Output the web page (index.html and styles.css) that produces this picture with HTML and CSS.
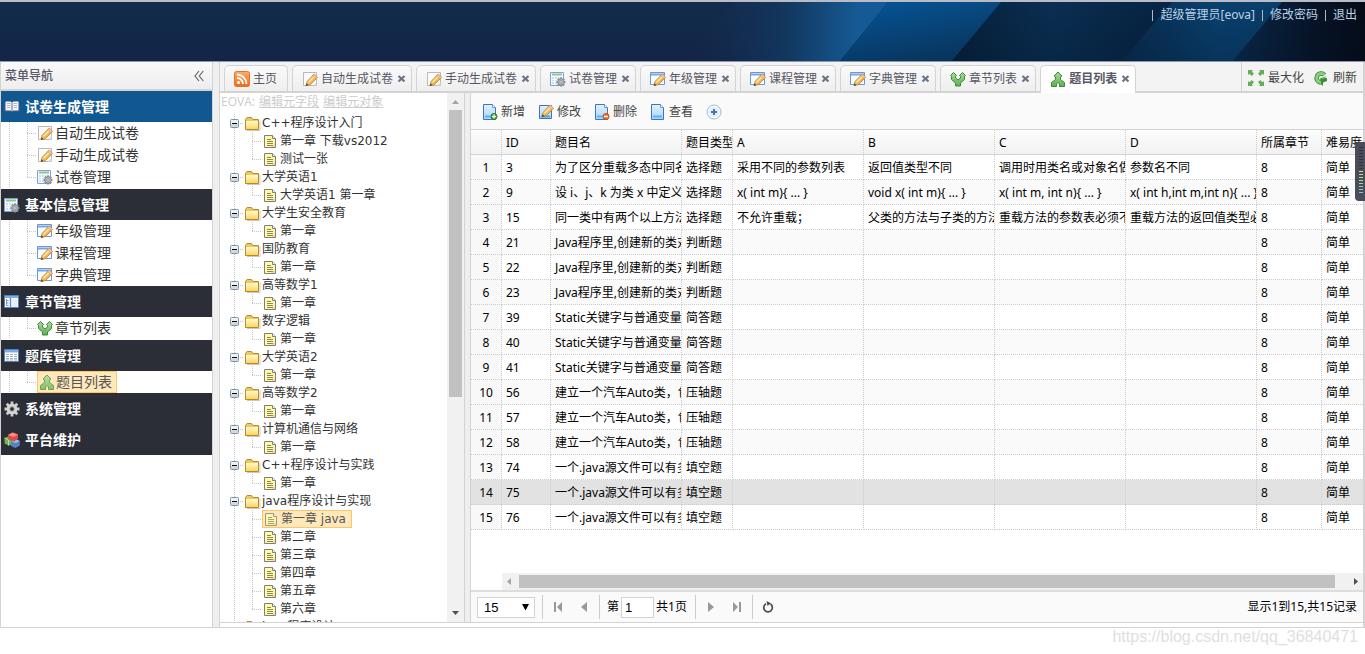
FILE: index.html
```html
<!DOCTYPE html>
<html lang="zh-CN">
<head>
<meta charset="utf-8">
<title>题目列表</title>
<link rel="stylesheet" href="styles.css">
</head>
<body>
<svg class="sprite" aria-hidden="true">
  <defs>
    <linearGradient id="gGreen" x1="0" y1="0" x2="0" y2="1"><stop offset="0" stop-color="#a5dc98"/><stop offset="1" stop-color="#5fb055"/></linearGradient>
    <linearGradient id="gRss" x1="0" y1="0" x2="0" y2="1"><stop offset="0" stop-color="#ffac62"/><stop offset="1" stop-color="#ee6a1c"/></linearGradient>
    <linearGradient id="gPen" x1="0" y1="0" x2="1" y2="1"><stop offset="0" stop-color="#ffe08a"/><stop offset="1" stop-color="#e8992c"/></linearGradient>
    <linearGradient id="gFold" x1="0" y1="0" x2="0" y2="1"><stop offset="0" stop-color="#fffbd0"/><stop offset="1" stop-color="#fbd560"/></linearGradient>
    <linearGradient id="gBlue" x1="0" y1="0" x2="0" y2="1"><stop offset="0" stop-color="#e2f1ff"/><stop offset="1" stop-color="#a9d4fb"/></linearGradient>
    <g id="pen"><path d="M4 14.500 5.200 10.300 12 3.200 15.500 6.500 8.400 13.600z" fill="url(#gPen)" stroke="#bb8030" stroke-width=".8"/><path d="M10.800 4.600 12.400 3 15.600 6.200 14 7.800z" fill="#f6c9a4" stroke="#c08850" stroke-width=".6"/><path d="M6.500 11.400 12 5.800" stroke="#fff1b8" stroke-width="1.200"/><path d="M3.800 15 4.600 12.300 6.500 14.200z" fill="#5c4630"/></g>
    <g id="cog"><path d="M11 6.500v9M6.500 11h9M7.800 7.800l6.400 6.400M14.200 7.800l-6.400 6.400" stroke="#858b92" stroke-width="2"/><circle cx="11" cy="11" r="3.300" fill="#b4b9be" stroke="#858b92"/><circle cx="11" cy="11" r="1.300" fill="#f4f6f8" stroke="#777d84" stroke-width=".7"/></g>
  </defs>
  <symbol id="i-rss" viewBox="0 0 16 16"><rect x=".5" y=".5" width="15" height="15" rx="2" fill="url(#gRss)" stroke="#e8702a"/><circle cx="4.500" cy="11.500" r="1.600" fill="#fff"/><path d="M3 7a6 6 0 0 1 6 6M3 3.500A9.500 9.500 0 0 1 12.500 13" fill="none" stroke="#fff" stroke-width="1.800"/></symbol>
  <symbol id="i-note" viewBox="0 0 16 16"><path d="M1.500 1.500h13v13h-13z" fill="#fbfbfb" stroke="#b9b9b9"/><path d="M11 14.500l3.500-3.500v3.500z" fill="#dcdcdc"/><use href="#pen"/></symbol>
  <symbol id="i-tablegear" viewBox="0 0 16 16"><path d="M.5 1.500h13v13H.5z" fill="#f3f8fe" stroke="#7fa3d3"/><path d="M2 3.500h10" stroke="#94c58b" stroke-width="2"/><path d="M2 6h10v7H2z" fill="#c9dcf2"/><path d="M2 8.500h10M2 10.500h10M4.500 6v7M7.500 6v7M10 6v7" stroke="#fff" stroke-width=".9"/><use href="#cog"/></symbol>
  <symbol id="i-winpen" viewBox="0 0 16 16"><path d="M.5 1.500h14v12H.5z" fill="#f7faff" stroke="#6f97cf"/><path d="M1 2h13v2.500H1z" fill="#79a6e2"/><path d="M1 2.500h13" stroke="#b5d0f4"/><use href="#pen"/></symbol>
  <symbol id="i-book" viewBox="0 0 16 16"><path d="M0 3.500h16v9.500H9.500L8 14l-1.500-1H0z" fill="#35548a"/><path d="M1.500 2.500h5L8 3.500l1.500-1h5V11.500h-5L8 12.300l-1.500-.8h-5z" fill="#f5f7fa"/><path d="M3 4.500h3.500M3 6.500h3.500M3 8.500h3.500M9.500 4.500H13M9.500 6.500H13M9.500 8.500H13" stroke="#aeb6c2"/><path d="M8 3.500v9" stroke="#5c6f90"/></symbol>
  <symbol id="i-columns" viewBox="0 0 16 16"><path d="M.5 1.500h14v12H.5z" fill="#fff" stroke="#4f82c7"/><path d="M1 2h13v2H1z" fill="#7fabe6"/><path d="M6.500 4v9.500" stroke="#5d8fd2" stroke-width="1.500"/><path d="M2.500 5v6.500h2M2.500 6.500h2M2.500 9h2" fill="none" stroke="#8892a0"/><path d="M8.500 5h5v8h-5z" fill="#e6f0fc"/></symbol>
  <symbol id="i-list" viewBox="0 0 16 16"><path d="M.5 1.500h14v12H.5z" fill="#fff" stroke="#4f82c7"/><path d="M1 2h13v2.500H1z" fill="#7fabe6"/><path d="M2 6.500h11M2 8.500h11M2 10.500h11M2 12h11" stroke="#a6acb5" stroke-dasharray="3 1"/></symbol>
  <symbol id="i-gear" viewBox="0 0 16 16"><path d="M8 .5v15M.5 8h15M2.700 2.700l10.600 10.600M13.300 2.700 2.700 13.300" stroke="#cfcfcf" stroke-width="2.800"/><circle cx="8" cy="8" r="5.300" fill="#d6d6d6"/><circle cx="8" cy="8" r="2.300" fill="#2b2d37" stroke="#a8a8a8"/></symbol>
  <symbol id="i-cubes" viewBox="0 0 16 16"><path d="M.5 6 4 4.500 8 6.500v6L4.500 13.500.5 11.500z" fill="#6cb35c"/><path d="M.5 6 4.500 8v5.500" fill="none" stroke="#b3e09f"/><path d="M7 9l4-2 4.800 2v4.500L11.500 16 7 14z" fill="#5681c3"/><path d="M7 9l4.500 2 4.300-2-4.300-2z" fill="#9fbfe8"/><path d="M4 3 8.500.5 14 2.500V7L10 9.500 4.500 7.500z" fill="#dc4b48"/><path d="M4 3l5.500 2L14 2.500 8.500.5z" fill="#f58d84"/></symbol>
  <symbol id="i-split" viewBox="0 0 16 16"><path d="M.5 4.500 3.500 1.500l3 3-1 .8V7L8 9l2.500-2V5.300l-1-.8 3-3 3 3-1 .8V8.500L10.500 12v3h-5v-3L1.500 8.500V5.300z" fill="url(#gGreen)" stroke="#3c8b3a" stroke-linejoin="round"/></symbol>
  <symbol id="i-merge" viewBox="0 0 16 16"><path d="M8 1l4 4-1.500 1v2.500l4 3v4h-5v-2.500L8 11.500 6.500 13v2.500h-5v-4l4-3V6L4 5z" fill="url(#gGreen)" stroke="#3c8b3a" stroke-linejoin="round"/></symbol>
  <symbol id="i-folder" viewBox="0 0 16 16"><path d="M2 15.500h13V5.500" fill="none" stroke="#c9c9c9"/><path d="M.5 4.500 2 2.500h4.500l1.500 2h5.500v10H.5z" fill="#f0c860" stroke="#b98a28"/><path d="M1 6h12v8H1z" fill="url(#gFold)"/></symbol>
  <symbol id="i-file" viewBox="0 0 16 16"><path d="M2.500 2.500h8l3 3v9h-11z" fill="#fffda4" stroke="#7f7f7f"/><path d="M13 10v4H9z" fill="#fbd9a0"/><path d="M10.500 2.500v3h3" fill="#fff" stroke="#7f7f7f"/><path d="M5 6.500h4M5 8.500h6M5 10.500h6M5 12.500h6" stroke="#8a8560"/></symbol>
  <symbol id="i-minus" viewBox="0 0 9 9"><rect x=".5" y=".5" width="8" height="8" rx="1" fill="#eef1f4" stroke="#7d93ab"/><path d="M1 5h7v3H1z" fill="#d5d9dd"/><path d="M2 4.500h5" stroke="#000"/></symbol>
  <symbol id="i-page" viewBox="0 0 16 16"><path d="M1.500.5h9l3 3v12h-12z" fill="url(#gBlue)" stroke="#3c74bd"/><path d="M10.500.5v3h3" fill="#fff" stroke="#6d9bd4"/><path d="M3 12.500h9" stroke="#5ab4f0" stroke-width="2"/></symbol>
  <symbol id="i-add" viewBox="0 0 16 16"><use href="#i-page"/><circle cx="12" cy="12.500" r="3" fill="#55a63a" stroke="#2f7d1c"/><path d="M12 10.500v4M10 12.500h4" stroke="#fff" stroke-width="1.200"/></symbol>
  <symbol id="i-edit" viewBox="0 0 16 16"><path d="M1.500 1.500h12v13h-12z" fill="url(#gBlue)" stroke="#3c74bd"/><path d="M3 12.500h9" stroke="#4ba6ea" stroke-width="2"/><use href="#pen" y="-2"/></symbol>
  <symbol id="i-del" viewBox="0 0 16 16"><use href="#i-page"/><circle cx="12" cy="12.500" r="3" fill="#f0702a" stroke="#cf4a0c"/><path d="M10 12.500h4" stroke="#fff" stroke-width="1.400"/></symbol>
  <symbol id="i-plus" viewBox="0 0 16 16"><circle cx="8" cy="8" r="7" fill="#fff" stroke="#a9b5c6"/><circle cx="8" cy="8" r="5.500" fill="#e3effb"/><path d="M8 5v6M5 8h6" stroke="#3e79bf" stroke-width="2"/></symbol>
  <symbol id="i-max" viewBox="0 0 16 16"><path d="M0 0h5L3.800 1.500 6 3.700 3.700 6 1.500 3.800 0 5zM16 0v5l-1.500-1.200L12.300 6 10 3.700l2.200-2.200L11 0zM0 16v-5l1.500 1.200L3.700 10 6 12.300l-2.200 2.200L5 16zM16 16h-5l1.200-1.500L10 12.300l2.300-2.300 2.200 2.200L16 11z" fill="#62ad59"/></symbol>
  <symbol id="i-refresh" viewBox="0 0 16 16"><path d="M11.500 5A4.500 4.500 0 1 0 8 12.500" fill="none" stroke="#3b8b3b" stroke-width="4.600"/><path d="M7.500 8h6.500v3l-4 1.500V16L6.500 12.500z" fill="#3c8b3a"/><path d="M11.500 5A4.500 4.500 0 1 0 8 12.500" fill="none" stroke="#8ecb83" stroke-width="3"/><path d="M6.500 8.500h5L13.500 6z" fill="#7dbd73"/></symbol>
  <symbol id="i-x" viewBox="0 0 9 9"><path d="M1.500 2l6 5.500M7.500 2l-6 5.500" stroke="#6a7385" stroke-width="2.200"/></symbol>
</svg>

<header class="banner">
  <svg class="banner-art" viewBox="0 0 705 59" preserveAspectRatio="none" aria-hidden="true">
    <defs>
      <linearGradient id="b1" x1="0" y1="0" x2="1" y2="0"><stop offset="0" stop-color="#13294a" stop-opacity="0"/><stop offset=".5" stop-color="#12375f"/><stop offset=".85" stop-color="#155a94"/><stop offset="1" stop-color="#155a94"/></linearGradient>
      <linearGradient id="b2" x1="0" y1="0" x2="1" y2="1"><stop offset="0" stop-color="#05569a"/><stop offset=".5" stop-color="#084a82"/><stop offset="1" stop-color="#0b3a66"/></linearGradient>
      <linearGradient id="b3" x1="0" y1="0" x2="1" y2="0"><stop offset="0" stop-color="#06213c"/><stop offset=".45" stop-color="#0a2f53"/><stop offset="1" stop-color="#062341"/></linearGradient>
      <linearGradient id="b4" x1="0" y1="0" x2="1" y2="0"><stop offset="0" stop-color="#0a2d50"/><stop offset=".6" stop-color="#09406f"/><stop offset="1" stop-color="#0a3e6b"/></linearGradient>
      <linearGradient id="b5" x1="0" y1="0" x2="1" y2="0"><stop offset="0" stop-color="#0a2b4d"/><stop offset=".6" stop-color="#071428"/><stop offset="1" stop-color="#060b18"/></linearGradient>
      <linearGradient id="bs" x1="0" y1="0" x2="0" y2="1"><stop offset="0" stop-color="#02101f" stop-opacity="0"/><stop offset="1" stop-color="#02101f" stop-opacity=".25"/></linearGradient>
    </defs>
    <path d="M75 0h153l-48 59H25z" fill="url(#b1)"/>
    <path d="M228 0h114l-50 59H180z" fill="url(#b2)"/>
    <path d="M341 0h172l-50 59H292z" fill="url(#b3)"/>
    <path d="M512 0h111l-50 59H462z" fill="url(#b4)"/>
    <path d="M622 0h83v59H573z" fill="url(#b5)"/>
    <path d="M228 0h477v59H180z" fill="url(#bs)"/>
  </svg>
  <nav class="account">
    <a href="#">超级管理员[eova]</a><a href="#">修改密码</a><a href="#">退出</a>
  </nav>
</header>

<main class="layout">
  <aside class="sidebar">
    <div class="sidebar-title"><span>菜单导航</span>
      <button type="button" class="fold" aria-label="收起"><svg width="10" height="12" viewBox="0 0 10 12"><path d="M5 1 1 6l4 5M9.300 1l-4 5 4 5" fill="none" stroke="#666" stroke-width="1.200"/></svg></button>
    </div>
    <section class="group"><h2 class="open"><svg class="ico"><use href="#i-book"/></svg>试卷生成管理</h2>
      <ul class="menu">
        <li><i class="vline"></i><i class="join"></i><a href="#"><svg class="ico"><use href="#i-note"/></svg>自动生成试卷</a></li>
        <li><i class="vline"></i><i class="join"></i><a href="#"><svg class="ico"><use href="#i-note"/></svg>手动生成试卷</a></li>
        <li><i class="vline"></i><i class="join end"></i><a href="#"><svg class="ico"><use href="#i-tablegear"/></svg>试卷管理</a></li>
      </ul></section>
    <section class="group"><h2><svg class="ico"><use href="#i-tablegear"/></svg>基本信息管理</h2>
      <ul class="menu">
        <li><i class="vline"></i><i class="join"></i><a href="#"><svg class="ico"><use href="#i-winpen"/></svg>年级管理</a></li>
        <li><i class="vline"></i><i class="join"></i><a href="#"><svg class="ico"><use href="#i-winpen"/></svg>课程管理</a></li>
        <li><i class="vline"></i><i class="join end"></i><a href="#"><svg class="ico"><use href="#i-winpen"/></svg>字典管理</a></li>
      </ul></section>
    <section class="group"><h2><svg class="ico"><use href="#i-columns"/></svg>章节管理</h2>
      <ul class="menu">
        <li><i class="vline"></i><i class="join end"></i><a href="#"><svg class="ico"><use href="#i-split"/></svg>章节列表</a></li>
      </ul></section>
    <section class="group"><h2><svg class="ico"><use href="#i-list"/></svg>题库管理</h2>
      <ul class="menu">
        <li><i class="vline"></i><i class="join end"></i><a href="#" class="picked"><svg class="ico"><use href="#i-merge"/></svg>题目列表</a></li>
      </ul></section>
    <section class="group"><h2><svg class="ico"><use href="#i-gear"/></svg>系统管理</h2></section>
    <section class="group"><h2><svg class="ico"><use href="#i-cubes"/></svg>平台维护</h2></section>
  </aside>

  <section class="center">
    <div class="tabbar">
      <ul class="tabs">
        <li class="home"><a href="#"><svg class="ico"><use href="#i-rss"/></svg>主页</a></li>
        <li><a href="#"><svg class="ico"><use href="#i-note"/></svg>自动生成试卷</a><button type="button" aria-label="关闭"><svg><use href="#i-x"/></svg></button></li>
        <li><a href="#"><svg class="ico"><use href="#i-note"/></svg>手动生成试卷</a><button type="button" aria-label="关闭"><svg><use href="#i-x"/></svg></button></li>
        <li><a href="#"><svg class="ico"><use href="#i-tablegear"/></svg>试卷管理</a><button type="button" aria-label="关闭"><svg><use href="#i-x"/></svg></button></li>
        <li><a href="#"><svg class="ico"><use href="#i-winpen"/></svg>年级管理</a><button type="button" aria-label="关闭"><svg><use href="#i-x"/></svg></button></li>
        <li><a href="#"><svg class="ico"><use href="#i-winpen"/></svg>课程管理</a><button type="button" aria-label="关闭"><svg><use href="#i-x"/></svg></button></li>
        <li><a href="#"><svg class="ico"><use href="#i-winpen"/></svg>字典管理</a><button type="button" aria-label="关闭"><svg><use href="#i-x"/></svg></button></li>
        <li><a href="#"><svg class="ico"><use href="#i-split"/></svg>章节列表</a><button type="button" aria-label="关闭"><svg><use href="#i-x"/></svg></button></li>
        <li class="current"><a href="#"><svg class="ico"><use href="#i-merge"/></svg>题目列表</a><button type="button" aria-label="关闭"><svg><use href="#i-x"/></svg></button></li>
      </ul>
      <div class="tab-tools">
        <button type="button"><svg class="ico"><use href="#i-max"/></svg>最大化</button>
        <button type="button"><svg class="ico"><use href="#i-refresh"/></svg>刷新</button>
      </div>
    </div>

    <div class="content">
      <div class="tree-panel">
        <div class="tree-scroll">
          <p class="meta">EOVA: <a href="#">编辑元字段</a> <a href="#">编辑元对象</a></p>
          <ul class="tree">
            <li class="root"><i class="exp"><svg><use href="#i-minus"/></svg></i><svg class="ico"><use href="#i-folder"/></svg>C++程序设计入门</li>
            <li><i class="vline"></i><i class="join"></i><span><svg class="ico"><use href="#i-file"/></svg>第一章 下载vs2012</span></li>
            <li><i class="vline"></i><i class="join end"></i><span><svg class="ico"><use href="#i-file"/></svg>测试一张</span></li>
            <li class="root"><i class="exp"><svg><use href="#i-minus"/></svg></i><svg class="ico"><use href="#i-folder"/></svg>大学英语1</li>
            <li><i class="vline"></i><i class="join end"></i><span><svg class="ico"><use href="#i-file"/></svg>大学英语1 第一章</span></li>
            <li class="root"><i class="exp"><svg><use href="#i-minus"/></svg></i><svg class="ico"><use href="#i-folder"/></svg>大学生安全教育</li>
            <li><i class="vline"></i><i class="join end"></i><span><svg class="ico"><use href="#i-file"/></svg>第一章</span></li>
            <li class="root"><i class="exp"><svg><use href="#i-minus"/></svg></i><svg class="ico"><use href="#i-folder"/></svg>国防教育</li>
            <li><i class="vline"></i><i class="join end"></i><span><svg class="ico"><use href="#i-file"/></svg>第一章</span></li>
            <li class="root"><i class="exp"><svg><use href="#i-minus"/></svg></i><svg class="ico"><use href="#i-folder"/></svg>高等数学1</li>
            <li><i class="vline"></i><i class="join end"></i><span><svg class="ico"><use href="#i-file"/></svg>第一章</span></li>
            <li class="root"><i class="exp"><svg><use href="#i-minus"/></svg></i><svg class="ico"><use href="#i-folder"/></svg>数字逻辑</li>
            <li><i class="vline"></i><i class="join end"></i><span><svg class="ico"><use href="#i-file"/></svg>第一章</span></li>
            <li class="root"><i class="exp"><svg><use href="#i-minus"/></svg></i><svg class="ico"><use href="#i-folder"/></svg>大学英语2</li>
            <li><i class="vline"></i><i class="join end"></i><span><svg class="ico"><use href="#i-file"/></svg>第一章</span></li>
            <li class="root"><i class="exp"><svg><use href="#i-minus"/></svg></i><svg class="ico"><use href="#i-folder"/></svg>高等数学2</li>
            <li><i class="vline"></i><i class="join end"></i><span><svg class="ico"><use href="#i-file"/></svg>第一章</span></li>
            <li class="root"><i class="exp"><svg><use href="#i-minus"/></svg></i><svg class="ico"><use href="#i-folder"/></svg>计算机通信与网络</li>
            <li><i class="vline"></i><i class="join end"></i><span><svg class="ico"><use href="#i-file"/></svg>第一章</span></li>
            <li class="root"><i class="exp"><svg><use href="#i-minus"/></svg></i><svg class="ico"><use href="#i-folder"/></svg>C++程序设计与实践</li>
            <li><i class="vline"></i><i class="join end"></i><span><svg class="ico"><use href="#i-file"/></svg>第一章</span></li>
            <li class="root"><i class="exp"><svg><use href="#i-minus"/></svg></i><svg class="ico"><use href="#i-folder"/></svg>java程序设计与实现</li>
            <li><i class="vline"></i><i class="join"></i><span class="picked"><svg class="ico"><use href="#i-file"/></svg>第一章 java</span></li>
            <li><i class="vline"></i><i class="join"></i><span><svg class="ico"><use href="#i-file"/></svg>第二章</span></li>
            <li><i class="vline"></i><i class="join"></i><span><svg class="ico"><use href="#i-file"/></svg>第三章</span></li>
            <li><i class="vline"></i><i class="join"></i><span><svg class="ico"><use href="#i-file"/></svg>第四章</span></li>
            <li><i class="vline"></i><i class="join"></i><span><svg class="ico"><use href="#i-file"/></svg>第五章</span></li>
            <li><i class="vline"></i><i class="join end"></i><span><svg class="ico"><use href="#i-file"/></svg>第六章</span></li>
            <li class="root"><i class="exp"><svg><use href="#i-minus"/></svg></i><svg class="ico"><use href="#i-folder"/></svg>java程序设计</li>
          </ul>
        </div>
        <div class="vbar"><svg width="7" height="4" viewBox="0 0 7 4"><path d="M0 4 3.500 0 7 4z" fill="#a3a3a3"/></svg><div class="vtrack"><div class="vthumb"></div></div><svg width="7" height="4" viewBox="0 0 7 4"><path d="M0 0h7L3.500 4z" fill="#505050"/></svg></div>
      </div>

      <div class="grid-panel">
        <div class="toolbar">
          <button type="button"><svg class="ico"><use href="#i-add"/></svg>新增</button>
          <button type="button"><svg class="ico"><use href="#i-edit"/></svg>修改</button>
          <button type="button"><svg class="ico"><use href="#i-del"/></svg>删除</button>
          <button type="button"><svg class="ico"><use href="#i-page"/></svg>查看</button>
          <button type="button" aria-label="更多"><svg class="ico"><use href="#i-plus"/></svg></button>
        </div>
        <div class="grid-view">
          <table class="grid">
            <colgroup><col class="c-no"><col class="c-id"><col class="c-text"><col class="c-type"><col class="c-text"><col class="c-text"><col class="c-text"><col class="c-text"><col class="c-chap"><col></colgroup>
            <thead><tr><th></th><th>ID</th><th>题目名</th><th>题目类型</th><th>A</th><th>B</th><th>C</th><th>D</th><th>所属章节</th><th>难易度</th></tr></thead>
            <tbody>
              <tr><td>1</td><td>3</td><td>为了区分重载多态中同名的方法</td><td>选择题</td><td>采用不同的参数列表</td><td>返回值类型不同</td><td>调用时用类名或对象名做前缀</td><td>参数名不同</td><td>8</td><td>简单</td></tr>
              <tr><td>2</td><td>9</td><td>设 i、j、k 为类 x 中定义的变量</td><td>选择题</td><td>x( int m){ ... }</td><td>void x( int m){ ... }</td><td>x( int m, int n){ ... }</td><td>x( int h,int m,int n){ ... }</td><td>8</td><td>简单</td></tr>
              <tr><td>3</td><td>15</td><td>同一类中有两个以上方法同名</td><td>选择题</td><td>不允许重载；</td><td>父类的方法与子类的方法之间</td><td>重载方法的参数表必须不同</td><td>重载方法的返回值类型必须</td><td>8</td><td>简单</td></tr>
              <tr><td>4</td><td>21</td><td>Java程序里,创建新的类对象用</td><td>判断题</td><td></td><td></td><td></td><td></td><td>8</td><td>简单</td></tr>
              <tr><td>5</td><td>22</td><td>Java程序里,创建新的类对象用</td><td>判断题</td><td></td><td></td><td></td><td></td><td>8</td><td>简单</td></tr>
              <tr><td>6</td><td>23</td><td>Java程序里,创建新的类对象用</td><td>判断题</td><td></td><td></td><td></td><td></td><td>8</td><td>简单</td></tr>
              <tr><td>7</td><td>39</td><td>Static关键字与普通变量的区别</td><td>简答题</td><td></td><td></td><td></td><td></td><td>8</td><td>简单</td></tr>
              <tr><td>8</td><td>40</td><td>Static关键字与普通变量的区别</td><td>简答题</td><td></td><td></td><td></td><td></td><td>8</td><td>简单</td></tr>
              <tr><td>9</td><td>41</td><td>Static关键字与普通变量的区别</td><td>简答题</td><td></td><td></td><td></td><td></td><td>8</td><td>简单</td></tr>
              <tr><td>10</td><td>56</td><td>建立一个汽车Auto类，包括轮胎</td><td>压轴题</td><td></td><td></td><td></td><td></td><td>8</td><td>简单</td></tr>
              <tr><td>11</td><td>57</td><td>建立一个汽车Auto类，包括轮胎</td><td>压轴题</td><td></td><td></td><td></td><td></td><td>8</td><td>简单</td></tr>
              <tr><td>12</td><td>58</td><td>建立一个汽车Auto类，包括轮胎</td><td>压轴题</td><td></td><td></td><td></td><td></td><td>8</td><td>简单</td></tr>
              <tr><td>13</td><td>74</td><td>一个.java源文件可以有多个类</td><td>填空题</td><td></td><td></td><td></td><td></td><td>8</td><td>简单</td></tr>
              <tr class="hover"><td>14</td><td>75</td><td>一个.java源文件可以有多个类</td><td>填空题</td><td></td><td></td><td></td><td></td><td>8</td><td>简单</td></tr>
              <tr><td>15</td><td>76</td><td>一个.java源文件可以有多个类</td><td>填空题</td><td></td><td></td><td></td><td></td><td>8</td><td>简单</td></tr>
            </tbody>
          </table>
          <div class="hbar"><svg width="4" height="7" viewBox="0 0 4 7"><path d="M4 0v7L0 3.500z" fill="#a3a3a3"/></svg><div class="hthumb"></div><svg width="4" height="7" viewBox="0 0 4 7"><path d="M0 0v7l4-3.500z" fill="#505050"/></svg></div>
        </div>
        <div class="pager">
          <span class="size"><select aria-label="每页条数"><option>15</option></select><svg width="7" height="7" viewBox="0 0 7 7"><path d="M0 0h7L3.500 6.500z" fill="#000"/></svg></span>
          <i class="sep"></i>
          <button type="button" aria-label="首页"><svg width="10" height="10" viewBox="0 0 10 10"><path d="M1 0h2v10H1zM9 0v10L4 5z" fill="#999"/></svg></button>
          <button type="button" aria-label="上一页"><svg width="10" height="10" viewBox="0 0 10 10"><path d="M8 0v10L2 5z" fill="#999"/></svg></button>
          <i class="sep"></i>
          <label for="page">第</label><input id="page" type="text" value="1"><span class="total">共1页</span>
          <i class="sep"></i>
          <button type="button" aria-label="下一页"><svg width="10" height="10" viewBox="0 0 10 10"><path d="M2 0v10l6-5z" fill="#999"/></svg></button>
          <button type="button" aria-label="末页"><svg width="10" height="10" viewBox="0 0 10 10"><path d="M1 0v10l5-5zM7 0h2v10H7z" fill="#999"/></svg></button>
          <i class="sep"></i>
          <button type="button" aria-label="刷新"><svg width="12" height="12" viewBox="0 0 12 12"><path d="M8.500 3A4.300 4.300 0 1 1 4 2.800" fill="none" stroke="#514a48" stroke-width="1.700"/><path d="M4.500 0 9 2.200 5.500 5z" fill="#514a48"/></svg></button>
          <span class="summary">显示1到15,共15记录</span>
        </div>
      </div>
    </div>
  </section>
</main>

<footer class="mark">https://blog.csdn.net/qq_36840471</footer>
<div class="meter" aria-hidden="true"><div></div></div>
</body>
</html>
```

FILE: styles.css
```css
* { box-sizing: border-box; }
html, body { height: 100%; }
body {
  margin: 0;
  display: flex;
  flex-direction: column;
  overflow: hidden;
  background: #fff;
  color: #333;
  font: 12px/18px "Noto Sans", "Noto Sans CJK SC", sans-serif;
}
ul, h2, p { margin: 0; padding: 0; list-style: none; }
a { color: inherit; text-decoration: none; }
i { font-style: normal; }
button { border: 0; padding: 0; background: none; color: inherit; font: inherit; display: flex; align-items: center; cursor: pointer; }
.sprite { position: absolute; width: 0; height: 0; }
.ico { width: 16px; height: 16px; flex: none; }

/* banner */
.banner {
  position: relative;
  flex: none;
  height: 62px;
  border-top: 2px solid #b9bcc6;
  border-bottom: 1px solid #8b96aa;
  background: linear-gradient(#132c4b, #122849 60%, #142445);
}
.banner-art { position: absolute; top: 0; right: 0; width: 705px; height: 100%; }
.account { position: relative; display: flex; justify-content: flex-end; gap: 7px; padding: 4px 8px 0 0; color: #bcd2e6; }
.account a { display: flex; align-items: center; gap: 7px; }
.account a::before { content: ""; width: 1px; height: 11px; background: #a9bccd; }

/* frame */
.layout { flex: 1; min-height: 0; display: flex; gap: 6px; background: #efefef; border-bottom: 1px solid #d3d3d3; }
.sidebar { width: 213px; flex: none; border: solid #d3d3d3; border-width: 0 1px; background: #fff; }
.sidebar-title {
  display: flex;
  align-items: center;
  justify-content: space-between;
  height: 29px;
  padding: 1px 8px 0 4px;
  border-bottom: 2px solid #d3d3d3;
  background: linear-gradient(#f9f9f9, #eeeeee);
  color: #575765;
  font-weight: 500;
}
.group h2 {
  display: flex;
  align-items: center;
  gap: 5px;
  height: 31px;
  padding-left: 3px;
  background: #2b2d37;
  color: #fff;
  font-size: 14px;
}
.group h2.open { background: #115890; }
.menu { font-size: 14px; }
.group:nth-of-type(odd) .menu { padding-bottom: 1px; }
.menu li, .tree li { display: flex; align-items: center; }
.menu li { height: 22px; padding-left: 8px; }
.menu a { display: flex; align-items: center; gap: 2px; height: 22px; }
.menu .picked { border: 1px solid #ffc566; padding: 0 4px 0 1px; gap: 1px; background: #ffe8ba; color: #555; }

.vline { flex: none; width: 18px; height: 100%; background: repeating-linear-gradient(#c4c4c4 0 1px, transparent 1px 2px) 0 0 / 1px 100% no-repeat; }
.join {
  flex: none;
  width: 10px;
  height: 100%;
  background:
    repeating-linear-gradient(#c4c4c4 0 1px, transparent 1px 2px) 0 0 / 1px 100% no-repeat,
    repeating-linear-gradient(90deg, #c4c4c4 0 1px, transparent 1px 2px) 0 50% / 9px 1px no-repeat;
}
.join.end { background-size: 1px 50%, 9px 1px; }

/* tabs */
.center { flex: 1; min-width: 0; display: flex; flex-direction: column; border: solid #d3d3d3; border-width: 0 2px 0 1px; background: #fff; }
.tabbar { flex: none; display: flex; justify-content: space-between; height: 31px; border-bottom: 2px solid #d3d3d3; background: #f3f3f3; }
.tabs { display: flex; gap: 4px; padding: 3px 0 0 4px; }
.tabs li {
  display: flex;
  align-items: center;
  gap: 4px;
  height: 26px;
  padding: 0 5px 0 9px;
  border: 1px solid #d3d3d3;
  border-bottom: 0;
  border-radius: 5px 5px 0 0;
  background: linear-gradient(#fafafa, #eeeeee);
  color: #575765;
  white-space: nowrap;
}
.tabs .home { padding-right: 10px; }
.tabs .current { height: 28px; padding-bottom: 2px; background: #fff; font-weight: bold; }
.tabs a { display: flex; align-items: center; gap: 3px; }
.tabs button svg { width: 9px; height: 9px; }
.tab-tools { display: flex; align-items: center; gap: 9px; padding: 2px 6px 0; border-left: 1px solid #d3d3d3; color: #444; }
.tab-tools button { gap: 4px; white-space: nowrap; }

.content { flex: 1; min-height: 0; display: flex; gap: 5px; margin-bottom: 4px; background: #efefef; border-bottom: 1px solid #d3d3d3; }

/* tree */
.tree-panel { flex: none; display: flex; width: 245px; border-right: 1px solid #d3d3d3; background: #fff; }
.tree-scroll { flex: 1; overflow: hidden; font-family: "DejaVu Sans", "Noto Sans CJK SC", sans-serif; }
.meta { height: 21px; padding-left: 1px; color: #ccc; font-family: "Open Sans", "Noto Sans CJK SC", sans-serif; }
.meta a { margin-left: 1px; text-decoration: underline; }
.tree li { height: 18px; padding-left: 14px; white-space: nowrap; }
.tree .root { gap: 1px; padding-left: 0; }
.exp {
  display: flex;
  align-items: center;
  width: 24px;
  height: 18px;
  padding-left: 10px;
  background:
    repeating-linear-gradient(#c4c4c4 0 1px, transparent 1px 2px) 14px 0 / 1px 100% no-repeat,
    repeating-linear-gradient(90deg, #c4c4c4 0 1px, transparent 1px 2px) 14px 50% / 9px 1px no-repeat;
}
.exp svg { width: 9px; height: 9px; }
.tree span { display: flex; align-items: center; gap: 2px; height: 18px; }
.tree .picked { border: 1px solid #ffc566; padding-right: 5px; background: #ffe8ba; color: #555; }
.picked .ico { opacity: .75; }

.vbar { flex: none; display: flex; flex-direction: column; align-items: center; gap: 6px; width: 17px; padding: 7px 0; background: #f1f1f1; }
.vtrack { flex: 1; width: 13px; }
.vthumb { height: 58%; background: #c1c1c1; }

/* grid */
.grid-panel { flex: 1; min-width: 0; display: flex; flex-direction: column; border-left: 1px solid #d3d3d3; background: #fff; color: #000; }
.toolbar { flex: none; display: flex; align-items: center; gap: 13px; height: 37px; padding: 1px 0 0 11px; border-bottom: 1px solid #d3d3d3; background: #fafafa; color: #444; }
.toolbar button { gap: 3px; }
.grid-view { flex: 1; min-height: 0; display: flex; flex-direction: column; justify-content: space-between; overflow: hidden; }
.grid { width: 100%; table-layout: fixed; border-collapse: separate; border-spacing: 0; }
.c-no { width: 31px; }
.c-id { width: 49px; }
.c-text { width: 131px; }
.c-type { width: 51px; }
.c-chap { width: 65px; }
.grid th, .grid td {
  height: 25px;
  padding: 2px 0 0 4px;
  border: dotted #ccc;
  border-width: 0 1px 1px 0;
  overflow: hidden;
  white-space: nowrap;
  text-align: left;
  font-weight: normal;
}
.grid th { background: linear-gradient(#fcfcfc, #f2f2f2); border-bottom: 1px solid #d3d3d3; }
.grid th:last-child, .grid td:last-child { border-right: 0; }
.grid tbody tr:nth-child(even) { background: #fafafa; }
.grid td:first-child { padding-left: 0; text-align: center; background: #f8f8f8; }
.grid tbody tr.hover, .grid tr.hover td:first-child { background: #e2e2e2; }

.hbar { flex: none; display: flex; align-items: center; gap: 8px; height: 17px; margin-left: 31px; padding: 0 5px; background: #f1f1f1; }
.hthumb { flex: 1; height: 13px; margin-right: 11px; background: #c1c1c1; }

.pager { flex: none; display: flex; align-items: center; height: 32px; padding: 0 6px; border-top: 2px solid #ddd; background: #fafafa; }
.size { position: relative; margin-right: 5px; }
.size select { display: block; width: 58px; height: 21px; padding: 0 6px; border: 1px solid #d3d3d3; border-radius: 0; background: #fff; color: #000; font: 13px "Liberation Sans", sans-serif; appearance: none; }
.size svg { position: absolute; top: 7px; right: 6px; pointer-events: none; }
.sep { width: 1px; height: 24px; margin: 0 2px; background: #ccc; }
.pager button { justify-content: center; width: 26px; height: 24px; }
.pager label { padding: 0 2px 0 5px; }
.pager input { width: 33px; height: 21px; padding: 0 3px; border: 1px solid #d3d3d3; background: #fff; font: 13px "Liberation Sans", sans-serif; }
.total { padding: 0 6px 0 2px; }
.summary { margin-left: auto; }

.mark { flex: none; height: 26px; padding: 0 7px 0 0; color: #e0e0e0; font: 16px/18px "Liberation Sans", sans-serif; text-align: right; }

/* floating level meter on the window edge */
.meter { position: fixed; top: 142px; right: 0; width: 10px; height: 59px; padding: 5px 2px 5px 4px; border-radius: 4px 0 0 4px; background: #4a4c5c; }
.meter div {
  height: 48px;
  background:
    repeating-linear-gradient(transparent 0 1px, #4a4c5c 1px 3px),
    linear-gradient(#30323f 50%, #d8e070 50%, #6fd0c4);
}
```
